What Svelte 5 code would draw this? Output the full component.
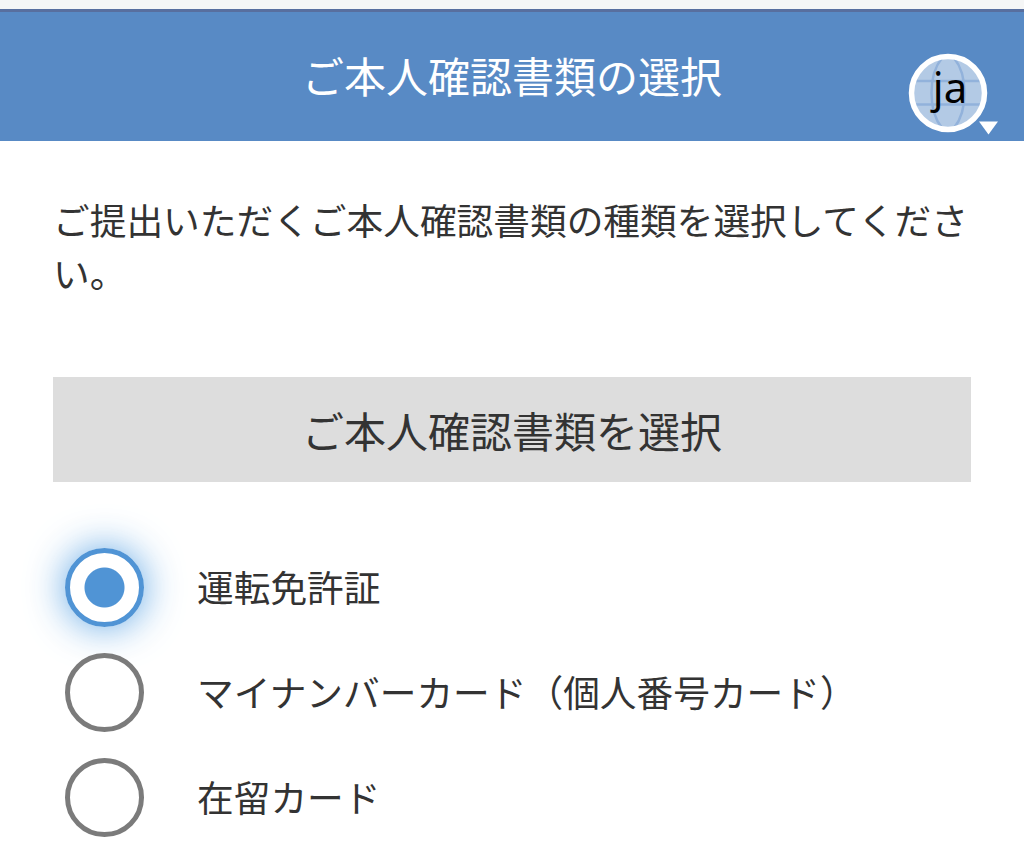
<script lang="ts">
    let selected: string = "license";

    const documents = [
        { id: "license", label: "運転免許証" },
        { id: "mynumber", label: "マイナンバーカード（個人番号カード）" },
        { id: "residence", label: "在留カード" },
    ];
</script>

<div class="page">
    <header>
        <h1>ご本人確認書類の選択</h1>
        <button class="language" aria-label="言語">
            <svg width="92" height="84" viewBox="0 0 92 84">
                <circle cx="42" cy="42" r="37" fill="#b3cae5" />
                <g fill="none" stroke="#92b2db" stroke-width="2.5">
                    <path d="M8 30H76M8 53.500H76" />
                    <path d="M36 7C22 24 22 60 36 77M48 7C62 24 62 60 48 77" />
                </g>
                <circle cx="42" cy="42" r="36.500" fill="none" stroke="#fff" stroke-width="5.500" />
                <path d="M73 70.500H92L82.500 83.500Z" fill="#fff" />
            </svg>
            <span>ja</span>
        </button>
    </header>

    <main>
        <p>ご提出いただくご本人確認書類の種類を選択してください。</p>
        <h2>ご本人確認書類を選択</h2>
        <div class="options">
            {#each documents as doc}
                <label>
                    <input type="radio" name="document" value={doc.id} bind:group={selected} />
                    <span>{doc.label}</span>
                </label>
            {/each}
        </div>
    </main>
</div>

<style>
    :global(body) {
        margin: 0;
        overflow: hidden;
    }
    .page {
        height: 861px;
        overflow: hidden;
        background: #fff;
        color: #333;
        font-family: "Noto Sans CJK JP", sans-serif;
        border-top: 9px solid #f5f6f6;
        box-sizing: border-box;
    }
    header {
        position: relative;
        height: 132px;
        box-sizing: border-box;
        padding-bottom: 3px;
        background: #588ac5;
        border-top: 3px solid #586f9f;
        display: flex;
        justify-content: center;
        align-items: center;
    }
    h1,
    h2 {
        margin: 0;
        font-size: 42px;
        font-weight: 400;
        line-height: 60px;
    }
    h1 {
        color: #fff;
    }
    .language {
        position: absolute;
        top: 38px;
        right: 26px;
        width: 92px;
        height: 86px;
        padding: 0;
        border: 0;
        background: none;
    }
    .language svg {
        display: block;
        overflow: visible;
    }
    .language span {
        position: absolute;
        top: 7px;
        left: 2px;
        width: 84px;
        text-align: center;
        font: 42px/60px "Noto Sans", sans-serif;
        color: #000;
    }
    main {
        padding: 52px 53px 0;
    }
    p {
        margin: 0 0 79px;
        font-size: 36.7px;
        line-height: 52.500px;
    }
    h2 {
        height: 105px;
        line-height: 106px;
        background: #ddd;
        text-align: center;
    }
    .options {
        padding: 53px 0 0 13px;
    }
    label {
        display: flex;
        align-items: center;
        height: 105px;
        font-size: 36.7px;
    }
    label span {
        padding-bottom: 4px;
    }
    input {
        appearance: none;
        width: 79px;
        height: 79px;
        margin: 0 53px 0 -1px;
        box-sizing: border-box;
        border: 5px solid #7b7b7b;
        border-radius: 50%;
        background: #fff;
    }
    input:checked {
        border-color: #5094d5;
        background: radial-gradient(circle, #5094d5 19.500px, #fff 20.500px);
        box-shadow: 0 0 38px rgba(77, 155, 225, 0.9);
    }
</style>
